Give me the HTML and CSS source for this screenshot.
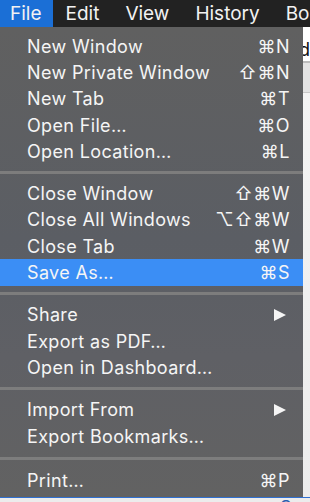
FILE: index.html
```html
<!DOCTYPE html>
<html lang="en">
<head>
	<meta charset="UTF-8">
	<title>File menu</title>
	<link rel="stylesheet" href="styles.css">
</head>
<body>
	<div class="screen">
		<!-- menu bar -->
		<div class="menubar">
			<span class="mb-item active">File</span>
			<span class="mb-item">Edit</span>
			<span class="mb-item">View</span>
			<span class="mb-item">History</span>
			<span class="mb-item">Bookmarks</span>
		</div>

		<div class="stage">
			<!-- dropdown -->
			<ul class="menu">
				<li class="item"><span>New Window</span><span class="key">⌘N</span></li>
				<li class="item"><span>New Private Window</span><span class="key">⇧⌘N</span></li>
				<li class="item"><span>New Tab</span><span class="key">⌘T</span></li>
				<li class="item"><span>Open File…</span><span class="key">⌘O</span></li>
				<li class="item"><span>Open Location…</span><span class="key">⌘L</span></li>
				<li class="sep"></li>
				<li class="item"><span>Close Window</span><span class="key">⇧⌘W</span></li>
				<li class="item"><span>Close All Windows</span><span class="key">⌥⇧⌘W</span></li>
				<li class="item"><span>Close Tab</span><span class="key">⌘W</span></li>
				<li class="item sel"><span>Save As…</span><span class="key">⌘S</span></li>
				<li class="sep"></li>
				<li class="item"><span>Share</span><span class="arrow"></span></li>
				<li class="item"><span>Export as PDF…</span></li>
				<li class="item"><span>Open in Dashboard…</span></li>
				<li class="sep"></li>
				<li class="item"><span>Import From</span><span class="arrow"></span></li>
				<li class="item"><span>Export Bookmarks…</span></li>
				<li class="sep last"></li>
				<li class="item"><span>Print…</span><span class="key">⌘P</span></li>
			</ul>
			<!-- page behind the menu -->
			<div class="page">
				<div class="pg-top">d</div>
				<div class="pg-bar"></div>
				<div class="pg-tab"></div>
				<div class="pg-rest"></div>
			</div>
		</div>
		<div class="bottom"><span class="link">Se</span></div>
	</div>
</body>
</html>
```
FILE: styles.css
```css
*{margin: 0;padding: 0;box-sizing: border-box;}
body{width: 310px;height: 502px;overflow: hidden;background: #fff;
	font-family: "Inter", "Noto Sans", "DejaVu Sans", sans-serif;color: #f5f5f5;}
.screen{display: flex;flex-direction: column;height: 502px;}

/* menu bar */
.menubar{display: flex;height: 27px;background: #222;white-space: nowrap;overflow: hidden;}
.mb-item{font-size: 19px;line-height: 27px;padding: 0 13px;color: #f2f2f2;}
.mb-item:first-child{padding: 0 11px 0 10px;}
.mb-item.active{background: #1b6fd6;}

.stage{display: flex;height: 470px;}

/* dropdown */
.menu{list-style: none;width: 303px;flex: none;padding: 6px 0 3px;
	background: linear-gradient(#606060, #5b5e64 45%, #5f6065 70%, #626262);}
.menu .item{display: flex;justify-content: space-between;align-items: center;height: 26.3px;
	padding: 0 13px 0 27px;font-size: 18px;letter-spacing: 0.35px;white-space: nowrap;}
.menu .item.sel{background: #3b8ef5;}
.menu .key{font-family: "Inter", "DejaVu Sans", sans-serif;letter-spacing: 0.5px;}
.menu .arrow{width: 0;height: 0;border-left: 12px solid #f5f5f5;border-top: 6px solid transparent;
	border-bottom: 6px solid transparent;margin-right: 4px;}
.menu .sep{height: 16px;display: flex;align-items: center;}
.menu .sep.last{height: 18px;}
.menu .sep::before{content: "";display: block;width: 100%;height: 3px;background: #7d7d7d;}

/* page strip at right */
.page{flex: 1;display: flex;flex-direction: column;background: #f2f2f2;overflow: hidden;}
.pg-top{height: 34px;background: #fff;color: #111;font-size: 18px;line-height: 46px;text-indent: -4px;}
.pg-bar{height: 2px;background: #bbb;}
.pg-tab{height: 30px;background: #e3e3e3;border-bottom: 1px solid #c8c8c8;}
.pg-rest{flex: 1;background: linear-gradient(#f4f4f4, #ececec);}

.bottom{flex: 1;background: #ececec;border-top: 1px solid #3070d0;text-align: right;overflow: hidden;}
.bottom .link{color: #2a5db0;font-size: 18px;line-height: 18px;margin-right: 8px;}
```
